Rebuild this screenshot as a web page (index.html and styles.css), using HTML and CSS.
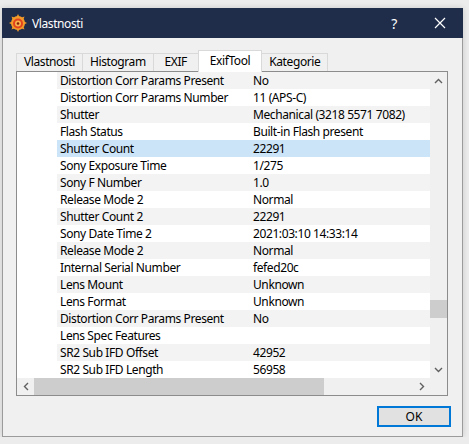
FILE: index.html
```html
<!DOCTYPE html>
<html lang="cs">
<head>
    <meta charset="UTF-8">
    <title>Vlastnosti</title>
    <link rel="stylesheet" href="styles.css">
</head>
<body>
    <div class="window">
        <!-- Title bar -->
        <div class="titlebar">
            <svg class="app-icon" width="18" height="18" viewBox="0 0 18 18">
                <g fill="#f39a2a">
                    <circle cx="9" cy="9" r="7"/>
                    <polygon points="9,0 11,4 7,4"/>
                    <polygon points="9,18 11,14 7,14"/>
                    <polygon points="0,9 4,7 4,11"/>
                    <polygon points="18,9 14,7 14,11"/>
                    <polygon points="2.5,2.5 6.5,4 4,6.5"/>
                    <polygon points="15.5,2.5 11.5,4 14,6.5"/>
                    <polygon points="2.5,15.5 6.5,14 4,11.5"/>
                    <polygon points="15.5,15.5 11.5,14 14,11.5"/>
                </g>
                <circle cx="9" cy="9.5" r="5" fill="#e2431e"/>
                <circle cx="9" cy="9.5" r="3" fill="#f6b24c"/>
                <circle cx="9" cy="9.5" r="1.3" fill="#8a1d0a"/>
            </svg>
            <span class="title">Vlastnosti</span>
            <div class="caption-btn">?</div>
            <div class="caption-btn">
                <svg width="12" height="12" viewBox="0 0 12 12">
                    <path d="M1 1 L11 11 M11 1 L1 11" stroke="#fff" stroke-width="1.2"/>
                </svg>
            </div>
        </div>

        <div class="content">
            <!-- Tabs -->
            <div class="tabs">
                <div class="tab">Vlastnosti</div>
                <div class="tab">Histogram</div>
                <div class="tab">EXIF</div>
                <div class="tab active">ExifTool</div>
                <div class="tab">Kategorie</div>
            </div>

            <!-- ExifTool list -->
            <div class="listbox">
                <div class="list-main">
                    <div class="rows">
                        <div class="row"><span class="indent"></span><span class="name">Distortion Corr Params Present</span><span class="value">No</span></div>
                        <div class="row"><span class="indent"></span><span class="name">Distortion Corr Params Number</span><span class="value">11 (APS-C)</span></div>
                        <div class="row"><span class="indent"></span><span class="name">Shutter</span><span class="value">Mechanical (3218 5571 7082)</span></div>
                        <div class="row"><span class="indent"></span><span class="name">Flash Status</span><span class="value">Built-in Flash present</span></div>
                        <div class="row selected"><span class="indent"></span><span class="name">Shutter Count</span><span class="value">22291</span></div>
                        <div class="row"><span class="indent"></span><span class="name">Sony Exposure Time</span><span class="value">1/275</span></div>
                        <div class="row"><span class="indent"></span><span class="name">Sony F Number</span><span class="value">1.0</span></div>
                        <div class="row"><span class="indent"></span><span class="name">Release Mode 2</span><span class="value">Normal</span></div>
                        <div class="row"><span class="indent"></span><span class="name">Shutter Count 2</span><span class="value">22291</span></div>
                        <div class="row"><span class="indent"></span><span class="name">Sony Date Time 2</span><span class="value">2021:03:10 14:33:14</span></div>
                        <div class="row"><span class="indent"></span><span class="name">Release Mode 2</span><span class="value">Normal</span></div>
                        <div class="row"><span class="indent"></span><span class="name">Internal Serial Number</span><span class="value">fefed20c</span></div>
                        <div class="row"><span class="indent"></span><span class="name">Lens Mount</span><span class="value">Unknown</span></div>
                        <div class="row"><span class="indent"></span><span class="name">Lens Format</span><span class="value">Unknown</span></div>
                        <div class="row"><span class="indent"></span><span class="name">Distortion Corr Params Present</span><span class="value">No</span></div>
                        <div class="row"><span class="indent"></span><span class="name">Lens Spec Features</span><span class="value"></span></div>
                        <div class="row"><span class="indent"></span><span class="name">SR2 Sub IFD Offset</span><span class="value">42952</span></div>
                        <div class="row"><span class="indent"></span><span class="name">SR2 Sub IFD Length</span><span class="value">56958</span></div>
                    </div>
                    <div class="vscroll">
                        <div class="arrow">
                            <svg width="9" height="6" viewBox="0 0 9 6"><path d="M1 5 L4.5 1.5 L8 5" fill="none" stroke="#606060" stroke-width="1.4"/></svg>
                        </div>
                        <div class="vtrack"><div class="vthumb"></div></div>
                        <div class="arrow">
                            <svg width="9" height="6" viewBox="0 0 9 6"><path d="M1 1 L4.5 4.5 L8 1" fill="none" stroke="#606060" stroke-width="1.4"/></svg>
                        </div>
                    </div>
                </div>
                <div class="hscroll-row">
                    <div class="hscroll">
                        <div class="arrow">
                            <svg width="6" height="9" viewBox="0 0 6 9"><path d="M5 1 L1.5 4.5 L5 8" fill="none" stroke="#606060" stroke-width="1.4"/></svg>
                        </div>
                        <div class="htrack"><div class="hthumb"></div></div>
                        <div class="arrow">
                            <svg width="6" height="9" viewBox="0 0 6 9"><path d="M1 1 L4.5 4.5 L1 8" fill="none" stroke="#606060" stroke-width="1.4"/></svg>
                        </div>
                    </div>
                    <div class="corner"></div>
                </div>
            </div>

            <div class="buttons">
                <button class="ok">OK</button>
            </div>
        </div>
    </div>
</body>
</html>
```

FILE: styles.css
```css
* {
    margin: 0;
    padding: 0;
    box-sizing: border-box;
}
body {
    font-family: "Noto Sans", "Open Sans", sans-serif;
    font-size: 12px;
    letter-spacing: -0.4px;
    background-color: #ececec;
    color: #000;
}
.window {
    width: 461px;
    margin: 8px 0 0 2px;
    box-shadow: 0 0 6px rgba(0, 0, 0, 0.15);
}
.titlebar {
    height: 30px;
    background-color: #1f2d4b;
    color: white;
    display: flex;
    align-items: center;
}
.app-icon {
    margin-left: 7px;
}
.title {
    margin-left: 5px;
    flex: 1;
    font-size: 12px;
}
.caption-btn {
    width: 46px;
    height: 30px;
    display: flex;
    align-items: center;
    justify-content: center;
    font-size: 14px;
}
.content {
    height: 399px;
    background-color: #f0f0f0;
    border: 1px solid #9b9b9b;
    border-top: none;
    padding: 12px 0 0 13px;
}
.tabs {
    display: flex;
    align-items: flex-end;
    height: 21px;
}
.tab {
    height: 18px;
    min-width: 46px;
    padding: 0 7px;
    border: 1px solid #d9d9d9;
    border-bottom: none;
    margin-right: -1px;
    background-color: #f0f0f0;
    line-height: 16px;
    text-align: center;
    white-space: nowrap;
}
.tab.active {
    height: 22px;
    padding: 0 11px;
    margin-bottom: -1px;
    background-color: #fff;
    position: relative;
    z-index: 1;
    line-height: 19px;
}
.listbox {
    width: 432px;
    border: 1px solid #8c8c8c;
    background-color: #fff;
}
.list-main {
    display: flex;
}
.rows {
    width: 413px;
}
.row {
    display: flex;
    height: 17px;
    line-height: 17px;
    white-space: nowrap;
}
.indent {
    width: 40px;
    background-color: #fff;
}
.name {
    width: 193px;
    padding-left: 3px;
}
.value {
    flex: 1;
    padding-left: 3px;
}
.row:nth-child(odd) .name,
.row:nth-child(odd) .value {
    background-color: #f3f3f3;
}
.row.selected .name,
.row.selected .value {
    background-color: #cce4f7;
}
.vscroll {
    width: 17px;
    background-color: #f0f0f0;
    display: flex;
    flex-direction: column;
}
.arrow {
    width: 17px;
    height: 17px;
    display: flex;
    align-items: center;
    justify-content: center;
}
.vtrack {
    flex: 1;
}
.vthumb {
    margin-top: 211px;
    height: 18px;
    background-color: #cdcdcd;
}
.hscroll-row {
    display: flex;
    height: 17px;
}
.hscroll {
    width: 413px;
    display: flex;
    background-color: #f0f0f0;
}
.htrack {
    flex: 1;
}
.hthumb {
    width: 290px;
    height: 17px;
    background-color: #cdcdcd;
}
.corner {
    width: 17px;
    background-color: #f0f0f0;
}
.buttons {
    display: flex;
    justify-content: flex-end;
    padding: 10px 11px 0 0;
}
.ok {
    width: 74px;
    height: 21px;
    font-family: inherit;
    font-size: 12px;
    letter-spacing: 0;
    background-color: #e1e1e1;
    border: 2px solid #0078d7;
    color: #000;
}
```
